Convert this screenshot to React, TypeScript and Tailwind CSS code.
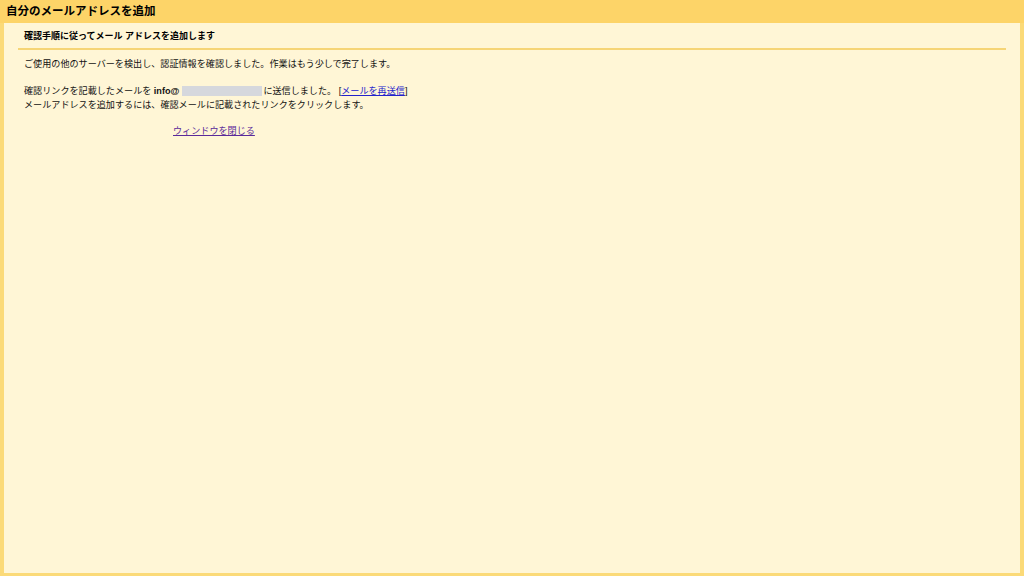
export default function App() {
  return (
    <div
      className="flex h-[576px] w-[1024px] flex-col bg-[#fff6d6] text-[#111]"
      style={{ fontFamily: '"Liberation Sans", "Noto Sans CJK JP", sans-serif' }}
    >
      {/* title bar */}
      <div className="flex h-[23px] shrink-0 items-center bg-[#fdd468] pl-[6px] text-[11.5px] font-bold text-black">
        自分のメールアドレスを追加
      </div>

      <div className="flex flex-1 flex-col border-x-[4px] border-b-[3px] border-[#fbda78] bg-[#fff6d6]">
        <div className="mx-[14px] flex h-[27px] shrink-0 items-center border-b-2 border-[#f6d576] pl-[6px] pt-[2px] text-[9px] font-bold text-black">
          確認手順に従ってメール アドレスを追加します
        </div>

        <div className="pl-[20px] pt-[7px] text-[9.1px] leading-[14px]">
          <p>ご使用の他のサーバーを検出し、認証情報を確認しました。作業はもう少しで完了します。</p>

          <div className="mt-[13px]">
            <p className="flex items-center">
              確認リンクを記載したメールを&nbsp;
              <b>info@</b>
              <span className="ml-[3px] mr-[1px] inline-block h-[10px] w-[80px] bg-[#d6d8dd]" />
              に送信しました。&nbsp;[
              <a href="#" className="text-[#2222cc] underline">
                メールを再送信
              </a>
              ]
            </p>
            <p>メールアドレスを追加するには、確認メールに記載されたリンクをクリックします。</p>
          </div>

          <div className="mt-[12px] pl-[149px]">
            <a href="#" className="text-[#5a2a9a] underline">
              ウィンドウを閉じる
            </a>
          </div>
        </div>
      </div>
    </div>
  );
}
